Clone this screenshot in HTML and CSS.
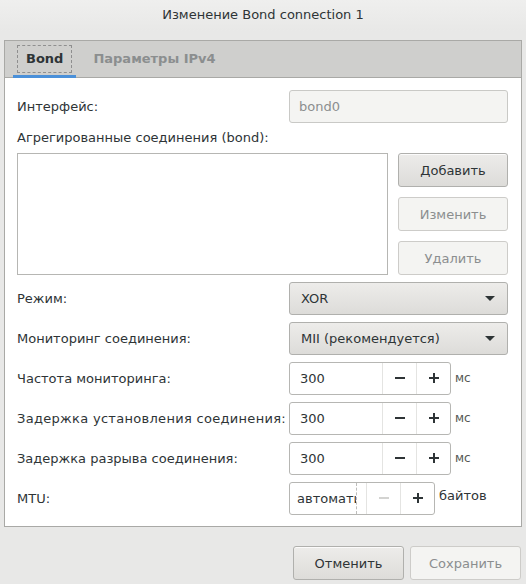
FILE: index.html
```html
<!DOCTYPE html>
<html lang="ru">
  <head>
    <meta charset="UTF-8" />
    <meta name="viewport" content="width=device-width, initial-scale=1.0" />
    <title>Изменение Bond connection 1</title>
    <link rel="stylesheet" href="styles.css">
  </head>

  <body>
    <div class="window">
      <div class="titlebar">Изменение Bond connection 1</div>

      <div class="dialog-body">
        <div class="notebook">
          <div class="tabs">
            <div class="tab active"><span class="tab-label">Bond</span></div>
            <div class="tab"><span class="tab-label">Параметры IPv4</span></div>
          </div>

          <div class="page">
            <div class="row row-first">
              <span class="row-label">Интерфейс:</span>
              <div class="entry disabled">bond0</div>
            </div>

            <p class="caption">Агрегированные соединения (bond):</p>

            <div class="slaves">
              <div class="slave-list"></div>
              <div class="slave-buttons">
                <button class="btn">Добавить</button>
                <button class="btn" disabled>Изменить</button>
                <button class="btn" disabled>Удалить</button>
              </div>
            </div>

            <div class="row">
              <span class="row-label">Режим:</span>
              <div class="combo">
                <span>XOR</span>
                <span class="arrow"></span>
              </div>
            </div>

            <div class="row">
              <span class="row-label">Мониторинг соединения:</span>
              <div class="combo">
                <span>MII (рекомендуется)</span>
                <span class="arrow"></span>
              </div>
            </div>

            <div class="row">
              <span class="row-label">Частота мониторинга:</span>
              <div class="spin">
                <span class="spin-value">300</span>
                <span class="spin-btn"><svg width="12" height="12" viewBox="0 0 12 12"><path d="M1 6h10" /></svg></span>
                <span class="spin-btn"><svg width="12" height="12" viewBox="0 0 12 12"><path d="M1 6h10M6 1v10" /></svg></span>
              </div>
              <span class="unit">мс</span>
            </div>

            <div class="row">
              <span class="row-label wide">Задержка установления соединения:</span>
              <div class="spin">
                <span class="spin-value">300</span>
                <span class="spin-btn"><svg width="12" height="12" viewBox="0 0 12 12"><path d="M1 6h10" /></svg></span>
                <span class="spin-btn"><svg width="12" height="12" viewBox="0 0 12 12"><path d="M1 6h10M6 1v10" /></svg></span>
              </div>
              <span class="unit">мс</span>
            </div>

            <div class="row">
              <span class="row-label">Задержка разрыва соединения:</span>
              <div class="spin">
                <span class="spin-value">300</span>
                <span class="spin-btn"><svg width="12" height="12" viewBox="0 0 12 12"><path d="M1 6h10" /></svg></span>
                <span class="spin-btn"><svg width="12" height="12" viewBox="0 0 12 12"><path d="M1 6h10M6 1v10" /></svg></span>
              </div>
              <span class="unit">мс</span>
            </div>

            <div class="row">
              <span class="row-label">MTU:</span>
              <div class="spin spin-mtu">
                <span class="spin-value"><span class="clip">автоматически</span></span>
                <span class="spin-btn off"><svg width="12" height="12" viewBox="0 0 12 12"><path d="M1 6h10" /></svg></span>
                <span class="spin-btn"><svg width="12" height="12" viewBox="0 0 12 12"><path d="M1 6h10M6 1v10" /></svg></span>
              </div>
              <span class="unit unit-mtu">байтов</span>
            </div>
          </div>
        </div>

        <div class="actions">
          <button class="btn btn-action">Отменить</button>
          <button class="btn btn-action" disabled>Сохранить</button>
        </div>
      </div>
    </div>
  </body>
</html>
```

FILE: styles.css
```css
body,
html {
  margin: 0;
  padding: 0;
  font-family: "DejaVu Sans", sans-serif;
  font-size: 13px;
  color: #2e3436;
  background-color: #e8e8e7;
}

.window {
  width: 526px;
  height: 584px;
  display: flex;
  flex-direction: column;
  overflow: hidden;
}

.titlebar {
  height: 31px;
  line-height: 30px;
  text-align: center;
  background: linear-gradient(#efefee, #e8e8e7);
  color: #2e3436;
}

.dialog-body {
  padding: 9px 4px 0 4px;
  display: flex;
  flex-direction: column;
}

/* notebook */
.notebook {
  border: 1px solid #a9a9a6;
  background: white;
}

.tabs {
  display: flex;
  height: 36px;
  padding-left: 8px;
  background: #cfcfcd;
  border-bottom: 1px solid #a9a9a6;
}

.tab {
  display: flex;
  align-items: center;
  padding: 0 4px;
  margin-right: 4px;
  font-weight: bold;
  color: #8b8e8f;
}

.tab-label {
  padding: 5px 8px 6px 8px;
  border: 1px dashed transparent;
}

.tab.active {
  color: #2e3436;
  height: 37px;
  margin-bottom: -1px;
  box-shadow: inset 0 -3px #4a90d9;
  padding-bottom: 1px;
  box-sizing: border-box;
}

.tab.active .tab-label {
  border-color: #8f8f8f;
}

.page {
  padding: 12px 13px 12px 12px;
  display: flex;
  flex-direction: column;
}

/* form rows */
.row {
  display: flex;
  align-items: center;
  height: 32px;
  margin-top: 8px;
}

.row-first {
  height: 33px;
  margin-top: 0;
}

.row-label {
  width: 272px;
  flex: none;
}

/* this one runs right up to its spin button */
.row-label.wide {
  letter-spacing: 0.3px;
}

.caption {
  margin: 6px 0 0 0;
  line-height: 17px;
}

.entry {
  flex: 1;
  height: 33px;
  box-sizing: border-box;
  border: 1px solid #c9c9c6;
  border-radius: 3px;
  padding: 0 9px;
  line-height: 31px;
}

.entry.disabled {
  background: #f4f4f2;
  color: #8b8e8f;
}

.slaves {
  display: flex;
  gap: 10px;
  margin-top: 7px;
  margin-bottom: -1px;
  height: 122px;
}

.slave-list {
  flex: 1;
  border: 1px solid #b6b6b3;
  background: white;
}

.slave-buttons {
  width: 110px;
  display: flex;
  flex-direction: column;
  justify-content: space-between;
}

/* buttons */
.btn {
  font-family: inherit;
  font-size: 13px;
  color: #2e3436;
  height: 34px;
  padding: 0;
  border: 1px solid #b0b0ad;
  border-radius: 3px;
  background: linear-gradient(#edecea, #dddcd9);
  box-shadow: inset 0 1px rgba(255, 255, 255, 0.8);
}

.btn:disabled {
  color: #8b8e8f;
  border-color: #cdccc9;
  background: #f4f4f2;
  box-shadow: none;
}

.combo {
  flex: 1;
  height: 33px;
  box-sizing: border-box;
  display: flex;
  align-items: center;
  justify-content: space-between;
  padding: 0 10px 0 11px;
  border: 1px solid #b0b0ad;
  border-radius: 3px;
  background: linear-gradient(#edecea, #dddcd9);
}

.arrow {
  width: 0;
  height: 0;
  border-left: 5px solid transparent;
  border-right: 5px solid transparent;
  border-top: 5px solid #2e3436;
  margin-right: 2px;
}

/* spin buttons */
.spin {
  display: flex;
  width: 162px;
  height: 33px;
  box-sizing: border-box;
  border: 1px solid #b6b6b3;
  border-radius: 3px;
  background: white;
}

.spin-value {
  flex: 1;
  padding-left: 10px;
  line-height: 31px;
  overflow: hidden;
}

.spin-btn {
  width: 33px;
  flex: none;
  border-left: 1px solid #e4e4e2;
  display: flex;
  align-items: center;
  justify-content: center;
}

.spin-btn svg path {
  stroke: #2e3436;
  stroke-width: 2;
  fill: none;
}

.spin-btn.off svg path {
  stroke: #d3d3d1;
}

.spin-mtu {
  width: 146px;
}

.spin-mtu .spin-value {
  padding-left: 7px;
  padding-right: 9px;
}

.clip {
  display: block;
  overflow: hidden;
  white-space: nowrap;
  border-right: 1px dashed #bdbdbb;
}

.unit {
  margin-left: 4px;
  font-size: 12px;
  color: #555753;
}

.unit-mtu {
  font-size: 13px;
  color: #2e3436;
  margin-top: -6px;
}

/* dialog actions */
.actions {
  display: flex;
  justify-content: flex-end;
  gap: 6px;
  margin-top: 19px;
  padding-right: 1px;
}

.btn-action {
  width: 111px;
}
```
